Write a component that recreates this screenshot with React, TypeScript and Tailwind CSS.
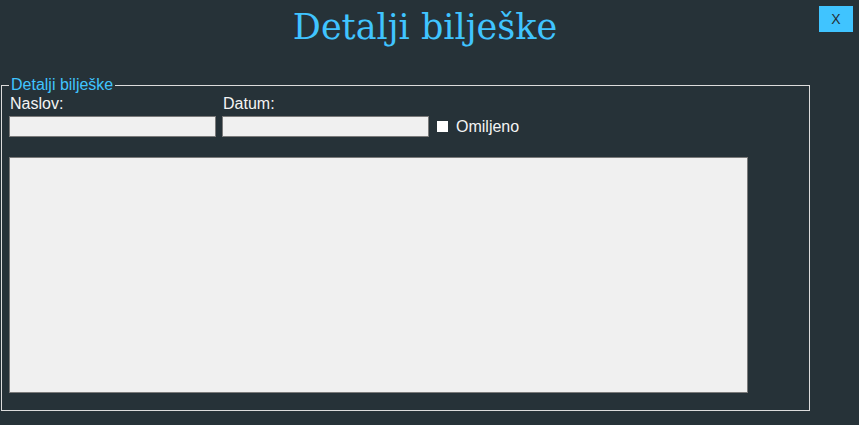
import React from 'react';

const App: React.FC = () => {
  return (
    <div className="relative w-[859px] h-[425px] overflow-hidden bg-[#263238] font-['Liberation_Sans',Arial,sans-serif] text-[16px] text-[#f4f4f4]">
      {/* Title */}
      <div className="h-[76px] flex justify-center pr-[9px]">
        <h1 className="mt-[5px] h-[44px] leading-[44px] font-['DejaVu_Serif',serif] text-[35px] text-[#40c4ff]">
          Detalji bilješke
        </h1>
      </div>

      {/* Close button */}
      <button className="absolute top-[6px] right-[6px] w-[34px] h-[26px] bg-[#40c4ff] text-[#263238] text-[14px] leading-[26px] text-center">
        X
      </button>

      {/* Group box */}
      <fieldset className="ml-[1px] w-[809px] h-[335px] border border-[#dcdcdc] pl-[7px] pr-0 pt-0 pb-0 m-0">
        <legend className="px-[2px] text-[#40c4ff] leading-[18px]">Detalji bilješke</legend>

        <div className="flex items-end gap-[6px] mt-[1px]">
          <div className="flex flex-col w-[207px]">
            <span className="leading-[18px] pl-[1px]">Naslov:</span>
            <input className="mt-[3px] h-[21px] bg-[#f0f0f0] border border-[#7a7a7a] outline-none" />
          </div>
          <div className="flex flex-col w-[207px]">
            <span className="leading-[18px] pl-[1px]">Datum:</span>
            <input className="mt-[3px] h-[21px] bg-[#f0f0f0] border border-[#7a7a7a] outline-none" />
          </div>
          <div className="flex items-center h-[21px] ml-[2px]">
            <span className="w-[11px] h-[11px] bg-white" />
            <span className="ml-[8px] leading-[18px]">Omiljeno</span>
          </div>
        </div>

        <textarea className="block mt-[20px] w-[739px] h-[236px] bg-[#f0f0f0] border border-[#7a7a7a] outline-none resize-none" />
      </fieldset>
    </div>
  );
};

export default App;
